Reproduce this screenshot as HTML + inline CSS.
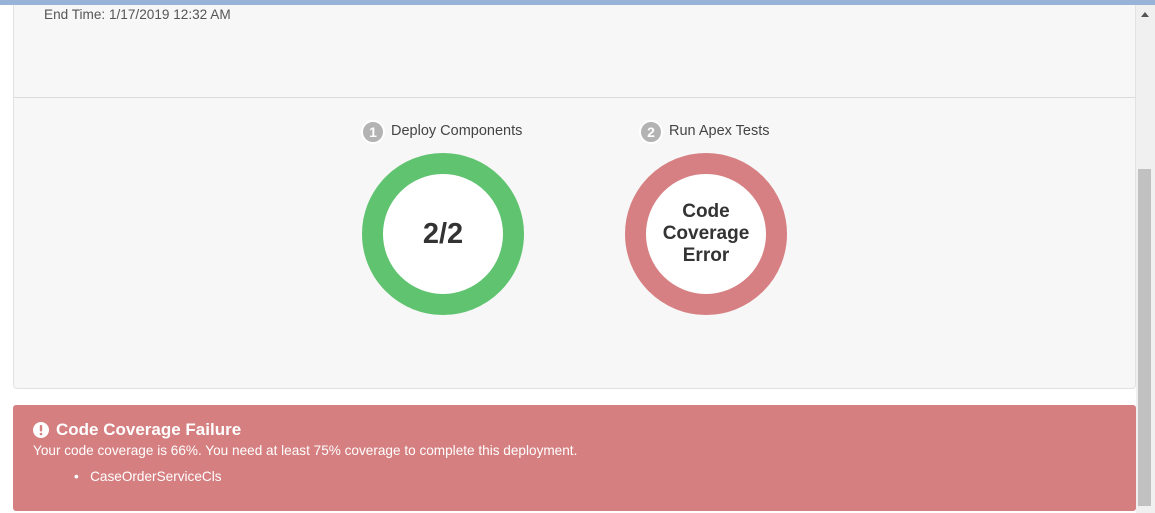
<!DOCTYPE html>
<html><head><style>
body{margin:0;width:1155px;height:513px;overflow:hidden;background:#fff;font-family:"Liberation Sans",sans-serif;position:relative}
.top{position:absolute;left:0;top:0;width:1155px;height:5px;background:#98b3d8}
.panel{position:absolute;left:13px;top:5px;width:1121px;height:383px;background:#f7f7f7;border:1px solid #e2e2e2;border-top:none;border-radius:0 0 4px 4px}
.div{position:absolute;left:0;top:92px;width:100%;height:1px;background:#dcdcdc}
.end{position:absolute;left:30px;top:2px;font-size:13.6px;color:#555}
.lbl{position:absolute;font-size:14.5px;color:#444}
.badge{position:absolute;width:20px;height:20px;border-radius:50%;background:#b3b3b3;border:2px solid #fff;color:#fff;font-weight:bold;font-size:14px;text-align:center;line-height:20px;top:120px}
.ring{position:absolute;top:153px;width:120px;height:120px;border-radius:50%;border:21px solid;background:#fff;display:flex;align-items:center;justify-content:center;text-align:center;color:#333;font-weight:bold}
.err{position:absolute;left:13px;top:405px;width:1123px;height:106px;background:#d57f80;border-radius:3px;color:#fff}
.sb{position:absolute;left:1136px;top:5px;width:19px;height:508px;background:#f0f0f0}
.th{position:absolute;left:1138px;top:169px;width:13px;height:337px;background:#c1c1c1}
</style></head><body>
<div class="top"></div>
<div class="panel"><div class="end">End Time: 1/17/2019 12:32 AM</div><div class="div"></div></div>
<div class="badge" style="left:361px">1</div><div class="lbl" style="left:391px;top:123px">Deploy Components</div>
<div class="badge" style="left:639px">2</div><div class="lbl" style="left:669px;top:123px">Run Apex Tests</div>
<div class="ring" style="left:362px;border-color:#60c370;font-size:29px">2/2</div>
<div class="ring" style="left:625px;border-color:#d78083;font-size:19px;line-height:22px">Code<br>Coverage<br>Error</div>
<div class="err">
<svg style="position:absolute;left:20px;top:17px" width="16" height="16" viewBox="0 0 16 16"><circle cx="8" cy="8" r="8" fill="#fff"/><rect x="6.8" y="3" width="2.4" height="6.5" rx="1" fill="#d57f80"/><circle cx="8" cy="12" r="1.3" fill="#d57f80"/></svg>
<div style="position:absolute;left:43px;top:15px;font-size:17px;font-weight:bold">Code Coverage Failure</div>
<div style="position:absolute;left:20px;top:38px;font-size:13.6px">Your code coverage is 66%. You need at least 75% coverage to complete this deployment.</div>
<div style="position:absolute;left:61px;top:64px;font-size:13.6px">•&nbsp;&nbsp;&nbsp;CaseOrderServiceCls</div>
</div>
<div class="sb"></div><div class="th"></div>
<div style="position:absolute;left:1141px;top:12px;width:0;height:0;border-left:4px solid transparent;border-right:4px solid transparent;border-bottom:5px solid #555"></div>
</body></html>
